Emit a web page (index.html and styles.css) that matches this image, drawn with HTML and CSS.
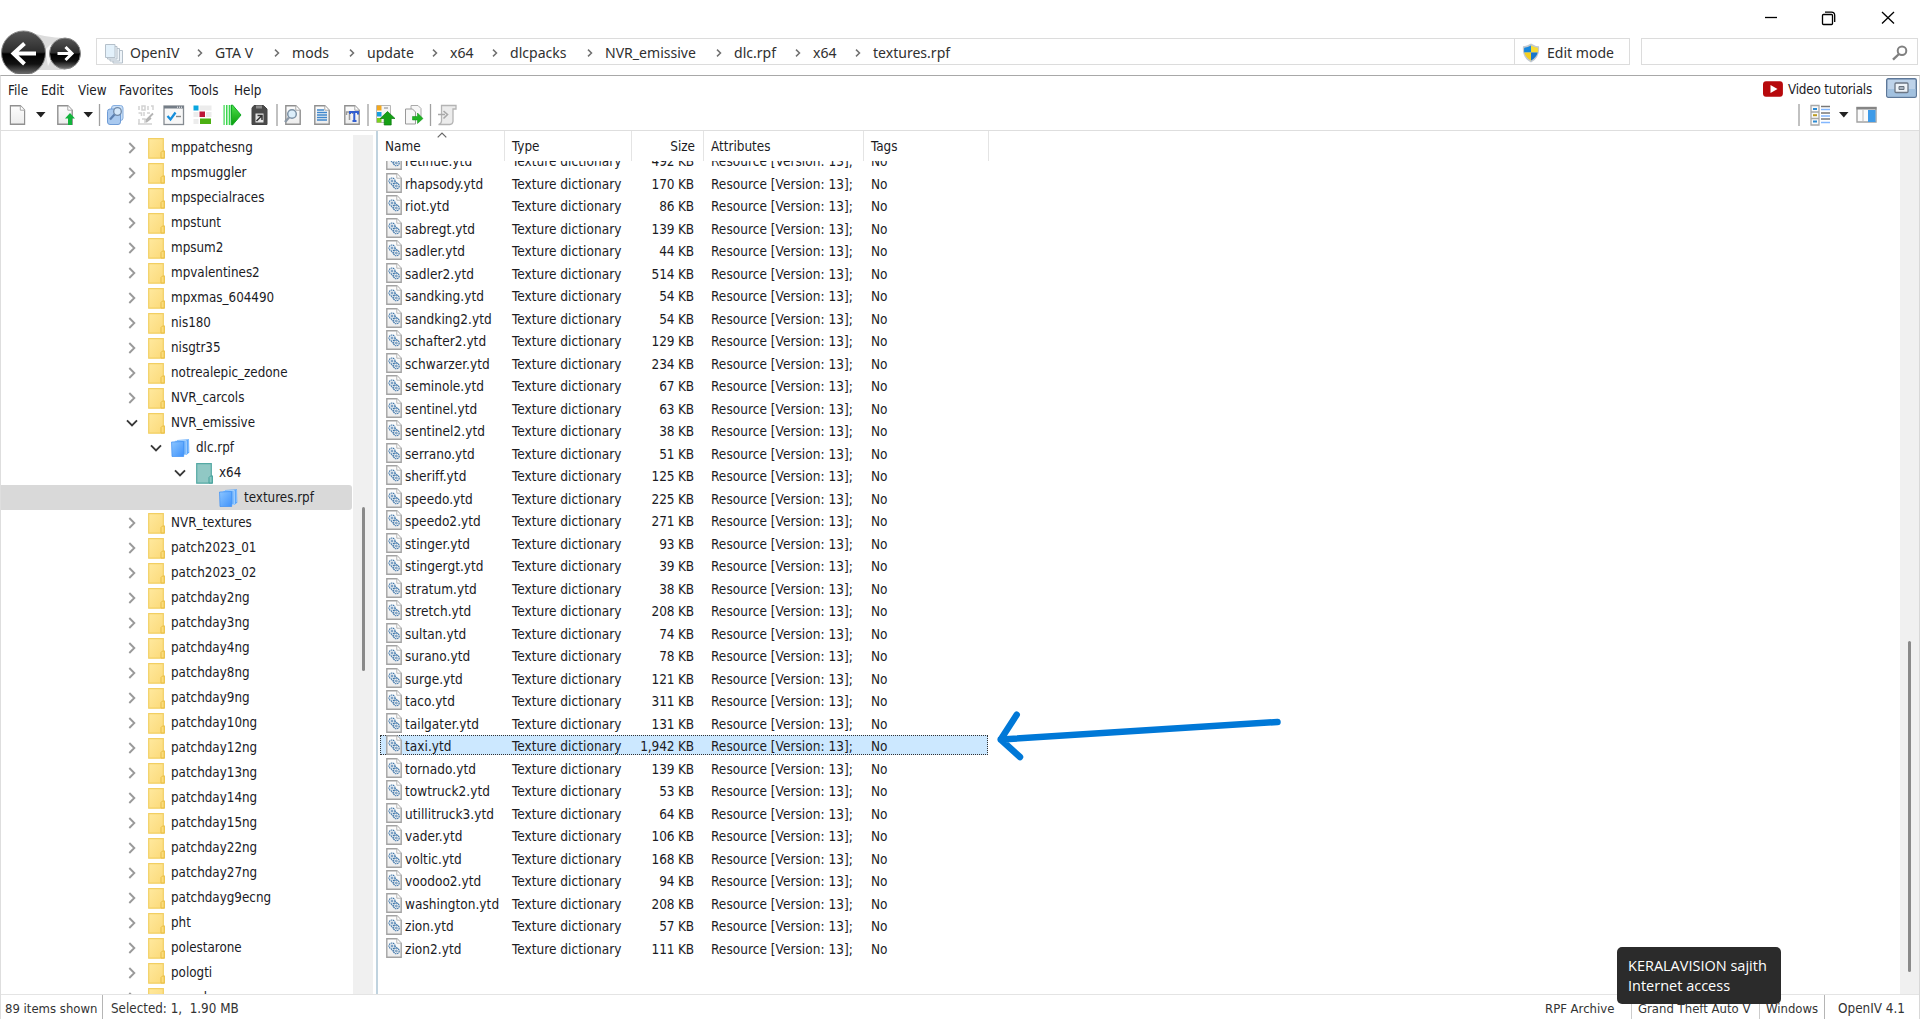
FILE: index.html
```
<!DOCTYPE html>
<html lang="en">
<head>
<meta charset="utf-8">
<title>OpenIV</title>
<link rel="stylesheet" href="styles.css">
</head>
<body>
<svg class="defs" aria-hidden="true">
  <defs>
    <linearGradient id="paper" x1="0" y1="0" x2="0" y2="1"><stop offset="0" stop-color="#fdfdfd"/><stop offset="1" stop-color="#ececec"/></linearGradient>
    <linearGradient id="fold" x1="0" y1="0" x2="1" y2="1"><stop offset="0" stop-color="#ffe99e"/><stop offset="1" stop-color="#fbd978"/></linearGradient>
    <linearGradient id="blue" x1="0" y1="0" x2="1" y2="1"><stop offset="0" stop-color="#8cc6ff"/><stop offset="1" stop-color="#3f92fb"/></linearGradient>
    <linearGradient id="orb" x1="0" y1="0" x2="0" y2="1"><stop offset="0" stop-color="#555"/><stop offset=".48" stop-color="#2c2c2c"/><stop offset=".52" stop-color="#000"/><stop offset=".75" stop-color="#111"/><stop offset="1" stop-color="#777"/></linearGradient>
    <linearGradient id="green" x1="0" y1="0" x2="0" y2="1"><stop offset="0" stop-color="#4be04b"/><stop offset="1" stop-color="#0b9c0b"/></linearGradient>
  </defs>
  <symbol id="page" viewBox="0 0 16 20"><path d="M.8.8h10l4.4 4.4v14H.8z" fill="url(#paper)" stroke="#909090" stroke-width="1.4"/><path d="M10.8.8v4.4h4.4" fill="#fff" stroke="#a8a8a8"/></symbol>
  <symbol id="ytd" viewBox="0 0 16 20"><path d="M.8.8h10l4.4 4.4v14H.8z" fill="url(#paper)" stroke="#a3a3a3" stroke-width="1.4"/><path d="M10.8.8v4.4h4.4" fill="#fff" stroke="#b5b5b5"/><g fill="none" stroke="#3b74a9"><circle cx="6" cy="8" r="3" stroke-width="1.1" stroke-dasharray="1.5 .6"/><circle cx="6" cy="8" r="1" stroke-width=".8"/><circle cx="10.400" cy="13" r="2.800" stroke-width="1.1" stroke-dasharray="1.5 .6"/><circle cx="10.400" cy="13" r=".9" stroke-width=".8"/><path d="M8.500 8l3.500 2.500M5 11l3 3.500" stroke-width=".8"/></g></symbol>
  <symbol id="folder" viewBox="0 0 17 21"><path d="M.7.7h14.600v12.500h1v7H.7z" fill="url(#fold)" stroke="#f2cf63" stroke-width="1.2"/><path d="M13 20v-5.500l1.500-1.500h1.700v7z" fill="#fbdc7c" stroke="#e9bd45"/></symbol>
  <symbol id="folder-teal" viewBox="0 0 17 21"><path d="M.7.7h14.600v12.500h1v7H.7z" fill="#90c8c4" stroke="#55a9a4" stroke-width="1.2"/><path d="M13 20v-5.500l1.500-1.500h1.700v7z" fill="#88c8c3" stroke="#45a19b"/></symbol>
  <symbol id="rpf" viewBox="0 0 19 18"><path d="M6 1l12-.8.3 13.200-3 2.600H6z" fill="#58a5fa"/><path d="M4 2l11-.6.300 14L4 16z" fill="#70b3fb" stroke="#bfe0ff" stroke-width=".7"/><path d="M.5 3l12-.5.2 15H1z" fill="url(#blue)" stroke="#3e8ff3" stroke-width=".7"/><path d="M15.500 1.500v13.500M17.400 1v12" stroke="#a7d2ff" stroke-width=".6"/></symbol>
  <symbol id="right" viewBox="0 0 8 12"><path d="M1.300 1l5 5-5 5" fill="none" stroke="#9a9a9a" stroke-width="1.900"/></symbol>
  <symbol id="down" viewBox="0 0 12 8"><path d="M1 1.300l5 5 5-5" fill="none" stroke="#383838" stroke-width="1.900"/></symbol>
  <symbol id="crumb" viewBox="0 0 6 8"><path d="M1 .6l3.500 3.400L1 7.400" fill="none" stroke="#707070" stroke-width="1.500"/></symbol>
</svg>

<div class="window">
  <header class="titlebar">
    <svg width="164" height="24" viewBox="0 0 164 24" fill="none" stroke="#000" stroke-width="1.300"><path d="M12 12.500h12"/><path d="M70.500 9.500h8a1 1 0 0 1 1 1v8a1 1 0 0 1-1 1h-8a1 1 0 0 1-1-1v-8a1 1 0 0 1 1-1zM72 7.200h6.500q3.200 0 3.200 3.200v6.600"/><path d="M129 7l12 11.500M141 7l-12 11.500"/></svg>
  </header>

  <div class="navbar">
    <svg class="orbs" width="82" height="44" viewBox="0 0 82 44">
      <path d="M26 1q20 7 39 7v32H30z" fill="#dcdcdc"/><path d="M45 20l6-6 2 12-5 10z" fill="#f6f6f6"/>
      <circle cx="23.500" cy="23" r="22" fill="url(#orb)" stroke="#888" stroke-width="1"/>
      <circle cx="65" cy="23.500" r="15.500" fill="url(#orb)" stroke="#888" stroke-width="1"/>
      <path d="M24.500 13.500L13.500 23.500l11 10.500M13.500 23.500H36" fill="none" stroke="#fff" stroke-width="4"/>
      <path d="M65.500 17l6.500 6.500-6.500 6.500M57.500 23.500H72" fill="none" stroke="#fff" stroke-width="3"/>
    </svg>
    <div class="address">
      <svg width="19" height="20" viewBox="0 0 19 20" fill="#eef4f9" stroke="#b5c0ca"><path d="M8 6.500h9.500v12.500H8z"/><path d="M5 4.500h9.500v12.500H5z"/><path d="M2.500 2.500h9.500v12.500H2.500z"/><path d="M.5.5h9.500v13H.5z" fill="#e3f1fb"/></svg>
      <nav class="crumbs" id="crumbs"></nav>
      <button class="edit">
        <svg width="18" height="20" viewBox="0 0 18 20"><path d="M9 .5q4 2.700 8 2.700Q18.300 14.500 9 19.500-.3 14.500 1 3.200q4 0 8-2.700z" fill="#c3c9cf"/><path d="M9 2.500v7H2.200q-.3-2.500 0-4.800Q6 4.500 9 2.500z" fill="#1787dd"/><path d="M9 2.500v7h6.800q.3-2.500 0-4.800Q12 4.500 9 2.500z" fill="#f8dc30"/><path d="M9 9.500v8q-5.400-3-6.700-8z" fill="#f5cf21"/><path d="M9 9.500v8q5.400-3 6.700-8z" fill="#1877cc"/></svg>
        <span>Edit mode</span>
      </button>
    </div>
    <div class="search"><svg width="16" height="16" viewBox="0 0 16 16" fill="none" stroke="#808080"><circle cx="10" cy="5.700" r="4.300" stroke-width="2"/><path d="M7 9l-6 5.700" stroke-width="2.400"/></svg></div>
  </div>

  <div class="frame">
    <div class="menubar">
      <nav class="menus"><span>File</span><span>Edit</span><span>View</span><span>Favorites</span><span>Tools</span><span>Help</span></nav>
      <div class="extras">
        <svg width="20" height="16" viewBox="0 0 20 16"><path d="M3 .3h14q2.700.2 2.900 3v9.400q-.2 2.800-2.900 3H3q-2.800-.2-3-3V3.300q.2-2.800 3-3z" fill="#b7090c"/><path d="M7.500 4l7 4-7 4z" fill="#fff"/></svg>
        <span>Video tutorials</span>
        <svg class="mode" width="31" height="20" viewBox="0 0 31 20"><rect x=".7" y=".7" width="29.600" height="18.600" rx="1.500" fill="#bed3ea" stroke="#5d7899" stroke-width="1.400"/><path d="M1.500 11h28v7.500h-28z" fill="#a2c1df"/><rect x="9" y="5" width="13" height="9.500" rx="1" fill="#eef3f8" stroke="#6b7684" stroke-width="1.300"/><path d="M13 8.500h5v3h-5z" fill="#aab4c0" stroke="#68727e"/></svg>
      </div>
    </div>

    <div class="toolbar">
      <svg width="460" height="26" viewBox="0 0 460 26">
        <g stroke="#a0a0a0" stroke-width="1.300"><path d="M99.500 2v22M277 2v22M368 2v22M430.500 2v22"/></g>
        <g fill="#222"><path d="M36 10h9.500l-4.700 5.500zM83.500 10h9.500l-4.700 5.500z"/></g>
        <use href="#page" x="9.500" y="3" width="16" height="20"/>
        <use href="#page" x="57" y="3" width="16" height="20"/>
        <path d="M70 11l5 5.500h-3V23h-4v-6.500h-3z" fill="#12b33c"/>
        <rect x="111.500" y="3.500" width="11.500" height="15" rx="2.500" fill="#c9dff6" stroke="#86aee0"/><rect x="107.500" y="7" width="13" height="15.500" rx="2.500" fill="#a9c9ef" stroke="#6f9cd6"/><circle cx="117.500" cy="9.500" r="3.800" fill="#d5e8fa" stroke="#7089a8" stroke-width="1.300"/><path d="M114.500 12.500l-4.500 5" stroke="#5b7fb0" stroke-width="2.200"/>
        <g fill="none" stroke="#d2d2d2" stroke-width="1.500"><path d="M139 4v4M142 4h3v4h-3zM148 4v4M151 4h2v4M138.500 11h3v3M144 10v4M147 11h3M139 17v5M142 17h3v4M138 22h14"/><path d="M153 11.500l-7 7M151 16l-5 4" stroke="#b4b4b4" stroke-width="1.800"/></g>
        <rect x="164" y="4" width="19.500" height="18.500" fill="#f7f7f7" stroke="#858b91" stroke-width="1.300"/><path d="M164 4h19.500v2.500H164z" fill="#747d87"/><path d="M177 5.200h5" stroke="#fff" stroke-dasharray="1 1"/><path d="M167.500 14l3 3.500 5-7" fill="none" stroke="#168edb" stroke-width="2.300"/><path d="M176 14.500h5" stroke="#888" stroke-width="1.400"/>
        <path d="M193.500 3.500h5v5h-5z" fill="#0aa6df"/><path d="M199.500 9.500h5.500v5.500h-5.500z" fill="#bd1738"/><path d="M200 16.500h11v5.500h-11z" fill="#4cb012"/><path d="M199.500 3.500h12v5h-12zM193.500 10h5v5h-5zM206 10h5.500v5H206zM193.500 17h5v5h-5z" fill="#ececec"/>
        <path d="M223.500 3h1.200v20h-1.200zM226 3h1.500v20H226zM228.700 3h1.800v20h-1.800z" fill="#3bd64d"/><path d="M231.500 3h1L241 13l-8.500 10h-1z" fill="url(#green)" stroke="#12a926"/>
        <path d="M254 3.500h9.500l3.500 3.500v15.500h-15V6z" fill="#4a4a4a" stroke="#444"/><path d="M256 3.500h6v3h-6z" fill="#8a8a8a"/><path d="M255.500 11.500h8v9h-8z" fill="#e4e4e4"/><path d="M257.500 13.500h4.500v4.500M261.500 14l-5 5" fill="none" stroke="#333" stroke-width="1.500"/>
        <use href="#page" x="285" y="3" width="16" height="20"/><circle cx="292" cy="12" r="4.300" fill="#dceefa" stroke="#7d92a6" stroke-width="1.500"/><path d="M289 15.500l-4 4.500" stroke="#8b98a6" stroke-width="2.400"/>
        <use href="#page" x="314" y="3" width="16" height="20"/><path d="M317 8h7M317 10.500h10M317 13h10M317 15.500h10M317 18h10" stroke="#3f86cc" stroke-width="1.300"/>
        <use href="#page" x="344" y="3" width="16" height="20"/><path d="M346.500 13v-3h6v2M349.500 10v8" fill="none" stroke="#999" stroke-width="1.500"/><path d="M350 12v-2h8v2.500M354.300 10v9M352.500 19h4" fill="none" stroke="#315ed0" stroke-width="2"/>
        <path d="M376.500 3.500h14v17h-14z" fill="#f5f5f5" stroke="#b7b7b7"/><path d="M377 3.500h4.500v5H377z" fill="#f4a81d"/><path d="M377 10h4.500v4.500H377z" fill="#159ee0"/><path d="M377 16h4.500v4.500H377z" fill="#7bd11e"/><path d="M384 6h4" stroke="#aaa" stroke-width="1.500"/><path d="M387.500 9.500l7.500 7h-3.800V23h-7v-6.500h-4z" fill="#159f16" stroke="#087a0c" stroke-width=".7"/>
        <path d="M411 3.500h7l3 3V17h-10z" fill="#f7f7f7" stroke="#aaa"/><path d="M405.500 7h7l3 3v12h-10z" fill="#f7f7f7" stroke="#999"/><path d="M412.500 14.500h5V11l5.500 5.500-5.500 5V18h-5z" fill="#20b323" stroke="#0b8c13" stroke-width=".5"/>
        <path d="M441.500 3.500h14.500v3.500h-3v12.500q-.5 3-3 3h-11.500q3-1 3-3.500z" fill="#ececec" stroke="#b4b4b4" stroke-width="1.300"/><path d="M438 12.500h7M443.500 9l4 3.500-4 4" fill="none" stroke="#a8a8a8" stroke-width="1.600"/>
      </svg>
      <svg class="views" width="82" height="26" viewBox="0 0 82 26">
        <path d="M1 2v22" stroke="#a0a0a0" stroke-width="1.300"/>
        <path d="M13 3.500h8v19.500h-8zM13 10h8M13 16.500h8" fill="#fafafa" stroke="#a8a8a8" stroke-width="1.300"/><path d="M15 7h4M15 19.500h4" stroke="#2d8ad2" stroke-width="2"/><path d="M15 13.200h4" stroke="#bd9b21" stroke-width="2"/><path d="M23 4.500h9M23 11h9M23 17h9" stroke="#777" stroke-width="1.500"/><path d="M23 7.500h9M23 14h9M23 20.500h9" stroke="#82b7ff" stroke-width="1.500"/>
        <path d="M41 10h9.500l-4.700 5.500z" fill="#222"/><path d="M59 5.500h19V20H59z" fill="#fbfbfb" stroke="#a2a2a2" stroke-width="1.400"/><path d="M58.500 5h20v2.500h-20z" fill="#858585"/><path d="M65 8v12" stroke="#bbb"/><path d="M70 8h7.500v12H70z" fill="#3f9be8"/>
      </svg>
    </div>

    <main class="panes">
      <aside class="tree">
        <div class="tree-rows" id="tree"></div>
        <div class="scroll tree-scroll"><i></i></div>
      </aside>
      <section class="files">
        <div class="cols">
          <div class="head"><span>Name<svg class="sort" width="10" height="6" viewBox="0 0 10 6"><path d="M.7 5.300L5 1l4.300 4.300" fill="none" stroke="#666" stroke-width="1.200"/></svg></span><span>Type</span><span>Size</span><span>Attributes</span><span>Tags</span></div>
          <div class="list" id="list"></div>
        </div>
        <div class="scroll list-scroll"><i></i></div>
      </section>
    </main>

    <footer class="status">
      <span class="shown">89 items shown</span><span class="selected">Selected: 1,&nbsp; 1.90 MB</span>
      <span class="archive">RPF Archive</span><span class="game">Grand Theft Auto V</span><span class="platform">Windows</span><span class="version">OpenIV 4.1</span>
    </footer>
  </div>
</div>

<svg class="pointer" width="300" height="60" viewBox="0 0 300 60" fill="none" stroke="#0078d7" stroke-width="6.500" stroke-linecap="round" stroke-linejoin="round"><path d="M287.500 17L10.700 34.500M26.700 9.700L10.700 34.500 30 52"/></svg>
<div class="toast">KERALAVISION sajith<br>Internet access</div>
<script src="app.js"></script>
</body>
</html>
```
FILE: styles.css
```
* { box-sizing: border-box; }
body { margin: 0; width: 1920px; height: 1019px; overflow: hidden; background: #fff; color: #1b1b1f; font: 13.4px/20px "DejaVu Sans Condensed", "Noto Sans", sans-serif; white-space: nowrap; }
svg { flex: none; display: block; }
.defs { position: absolute; width: 0; height: 0; }
.window { height: 1019px; display: flex; flex-direction: column; }

.titlebar { height: 30px; display: flex; justify-content: flex-end; align-items: flex-start; padding: 5px 3px 0 0; }

.navbar { height: 45px; display: flex; align-items: flex-start; font: 14.05px/20px "Noto Sans", sans-serif; color: #303030; }
.orbs { margin-right: 14px; }
.address { width: 1534px; height: 27px; margin-top: 8px; border: 1px solid #dcdcdc; display: flex; align-items: center; padding-left: 8px; }
.address > svg { margin-top: 4px; }
.crumbs { flex: 1; display: grid; grid-template-columns: 85px 77px 75px 83px 60px 95px 129px 79px 60px auto; margin-left: 6px; padding-top: 3px; }
.crumbs span { display: flex; align-items: center; justify-content: space-between; padding-right: 12px; }
.edit { width: 115px; height: 25px; border: 0; border-left: 1px solid #dcdcdc; background: none; display: flex; align-items: center; gap: 7px; padding: 2px 0 0 7px; font: inherit; color: inherit; }
.search { width: 277px; height: 27px; margin: 8px 0 0 11px; border: 1px solid #dcdcdc; display: flex; justify-content: flex-end; padding: 6px 9px 0 0; }

.frame { flex: 1; min-height: 0; border: 1px solid #b4b4b4; border-color: #a8a8a8 #d8d8d8 transparent #dedede; border-bottom: 0; display: flex; flex-direction: column; }
.menubar { height: 26px; display: flex; justify-content: space-between; padding-left: 7px; }
.menus { display: grid; grid-template-columns: 33px 37px 41px 70px 45px auto; padding-top: 5px; }
.extras { display: flex; align-items: flex-start; padding-right: 2px; letter-spacing: -0.22px; }
.extras > svg:first-child { margin: 5px 5px 0 0; }
.extras span { width: 98px; margin-top: 4px; }
.extras .mode { margin-top: 2px; }
.toolbar { height: 29px; display: flex; justify-content: space-between; border-bottom: 1px solid #dedede; }
.toolbar svg { margin-left: -1px; }
.toolbar .views { margin-right: 39px; }

.panes { flex: 1; min-height: 0; display: flex; }
.tree { width: 372px; display: flex; padding-top: 4px; overflow: hidden; }
.tree-rows { width: 352px; font-size: 13.3px; }
.node { height: 25px; width: 351px; display: flex; align-items: center; padding: 1px 0 0 calc(124px + var(--depth) * 24px); }
.node.current { background: #d9d9d9; border-radius: 0 3px 3px 0; }
.node .twist { width: 14px; display: flex; justify-content: center; margin-right: 9px; }
.node .pic { width: 23px; }
.node.is-rpf .twist { margin-right: 8px; }
.node.is-rpf .pic { width: 25px; }
.scroll { background: #f0f0f0; }
.scroll i { display: block; width: 3px; background: #8a8a8a; border-radius: 2px; }
.tree-scroll { width: 20px; height: 864px; padding: 372px 0 0 9px; }
.tree-scroll i { height: 164px; }

.files { flex: 1; margin-left: 3px; border-left: 2px solid #c0d3df; display: flex; justify-content: space-between; overflow: hidden; }
.cols { width: 611px; }
.head, .file { display: grid; grid-template-columns: 127px 127px 72px 160px 125px; }
.head { height: 30px; position: relative; background: #fff; }
.head span { border-right: 1px solid #e4e4e4; padding: 6px 0 0 7px; }
.head span:nth-child(3) { text-align: right; padding-right: 8px; }
.sort { position: absolute; left: 59px; top: 1px; }
.list { height: 833px; overflow: hidden; }
.rows { margin-top: -11px; }
.file { height: 22.5px; }
.file > span { height: 20px; padding-left: 7px; line-height: 23px; font-size: 13.5px; letter-spacing: 0.04px; }
.file > span:nth-child(3) { text-align: right; padding-right: 10px; letter-spacing: -0.15px; }
.file > .name { display: flex; gap: 3px; padding-left: 8px; }
.file.current { position: relative; z-index: 0; }
.file.current::before { content: ""; position: absolute; z-index: -1; inset: 0 1px 2.5px 2px; background: #cce8ff; border: 1px dotted #333; }
.list-scroll { width: 19px; padding: 510px 0 0 8px; }
.list-scroll i { height: 331px; }

.status { height: 25px; border-top: 1px solid #e4e4e4; display: flex; color: #333; font-size: 13px; padding-left: 4px; }
.status span { padding-top: 4px; height: 24px; }
.shown { width: 98px; border-right: 1px solid #b5b5b5; }
.selected { flex: 1; padding-left: 8px; font-size: 13.3px; }
.archive { width: 86px; }
.game { width: 128px; border-left: 1px solid #ccc; padding-left: 6px; }
.platform { width: 66px; border-left: 1px solid #ccc; border-right: 1px solid #b5b5b5; padding-left: 6px; }
.version { width: 94px; padding-left: 13px; font-size: 13.4px; }

.pointer { position: absolute; left: 990px; top: 705px; }
.toast { position: absolute; left: 1617px; top: 947px; width: 164px; height: 57px; padding: 9px 11px; background: #2b2b2b; border-radius: 5px; color: #fff; font: 14.5px/20px "Open Sans", sans-serif; }
```
FILE: app.js
```
const icon = (id, w, h) => `<svg width="${w}" height="${h}"><use href="#${id}"/></svg>`;

const crumbs = ["OpenIV", "GTA V", "mods", "update", "x64", "dlcpacks", "NVR_emissive", "dlc.rpf", "x64", "textures.rpf"];
document.getElementById("crumbs").innerHTML = crumbs
  .map((c, i) => `<span>${c}${i < crumbs.length - 1 ? icon("crumb", 6, 8) : ""}</span>`).join("");

// name, depth, icon, state
const nodes = [
  ..."mppatchesng mpsmuggler mpspecialraces mpstunt mpsum2 mpvalentines2 mpxmas_604490 nis180 nisgtr35 notrealepic_zedone NVR_carcols".split(" "),
  ["NVR_emissive", 0, "folder", "open"],
  ["dlc.rpf", 1, "rpf", "open"],
  ["x64", 2, "folder-teal", "open"],
  ["textures.rpf", 3, "rpf", "current"],
  ..."NVR_textures patch2023_01 patch2023_02 patchday2ng patchday3ng patchday4ng patchday8ng patchday9ng patchday10ng patchday12ng patchday13ng patchday14ng patchday15ng patchday22ng patchday27ng patchdayg9ecng pht polestarone pologti porsche".split(" ")
];
document.getElementById("tree").innerHTML = nodes.map(n => {
  const [name, depth, pic, state] = Array.isArray(n) ? n : [n, 0, "folder", "closed"];
  const twist = state === "open" ? icon("down", 12, 8) : state === "closed" ? icon("right", 8, 12) : "";
  const size = pic === "rpf" ? [19, 18] : [17, 21];
  return `<div class="node ${state} is-${pic}" style="--depth:${depth}"><span class="twist">${twist}</span><span class="pic">${icon(pic, ...size)}</span>${name}</div>`;
}).join("");

const files = "retinue 492,rhapsody 170,riot 86,sabregt 139,sadler 44,sadler2 514,sandking 54,sandking2 54,schafter2 129,schwarzer 234,seminole 67,sentinel 63,sentinel2 38,serrano 51,sheriff 125,speedo 225,speedo2 271,stinger 93,stingergt 39,stratum 38,stretch 208,sultan 74,surano 78,surge 121,taco 311,tailgater 131,taxi 1942,tornado 139,towtruck2 53,utillitruck3 64,vader 106,voltic 168,voodoo2 94,washington 208,zion 57,zion2 111";
document.getElementById("list").innerHTML = '<div class="rows">' + files.split(",").map(f => {
  const [name, kb] = f.split(" ");
  return `<div class="file${name === "taxi" ? " current" : ""}"><span class="name">${icon("ytd", 16, 20)}${name}.ytd</span><span>Texture dictionary</span><span>${Number(kb).toLocaleString("en-US")} KB</span><span>Resource [Version: 13];</span><span>No</span></div>`;
}).join("") + "</div>";
```
